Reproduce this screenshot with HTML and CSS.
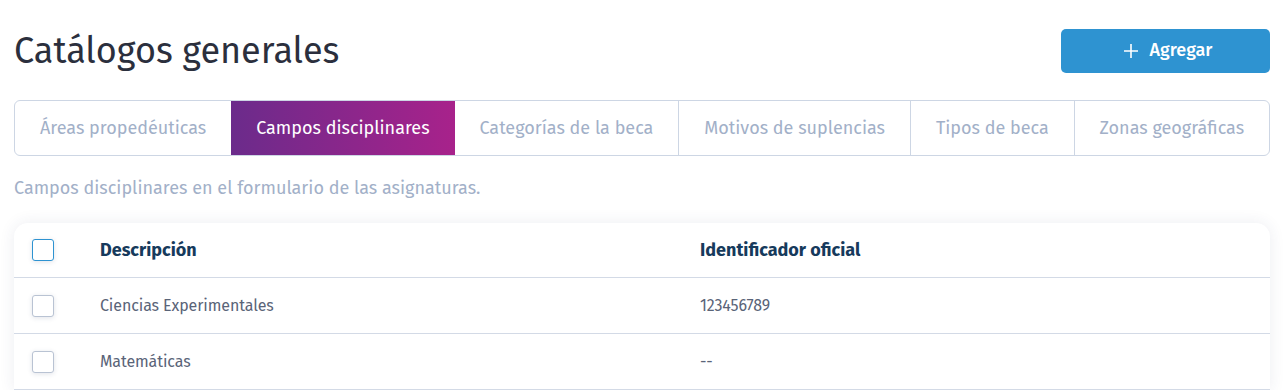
FILE: index.html
```html
<!DOCTYPE html>
<html lang="es">
<head>
<meta charset="utf-8">
<title>Catálogos generales</title>
<link rel="stylesheet" href="styles.css">
</head>
<body>
<div class="page">
  <header class="top">
    <h1 class="title">Catálogos generales</h1>
    <button class="btn-add"><svg class="plus" width="16" height="16" viewBox="0 0 16 16"><path d="M8 1v14M1 8h14" stroke="#fff" stroke-width="1.6" fill="none"/></svg><span>Agregar</span></button>
  </header>
  <nav class="tabs">
    <div class="tab">Áreas propedéuticas</div>
    <div class="tab active">Campos disciplinares</div>
    <div class="tab">Categorías de la beca</div>
    <div class="tab">Motivos de suplencias</div>
    <div class="tab">Tipos de beca</div>
    <div class="tab">Zonas geográficas</div>
  </nav>
  <p class="subtitle">Campos disciplinares en el formulario de las asignaturas.</p>
  <div class="card">
    <div class="row head">
      <div class="cell-check"><span class="check blue"></span></div>
      <div class="cell-desc">Descripción</div>
      <div class="cell-id">Identificador oficial</div>
    </div>
    <div class="row">
      <div class="cell-check"><span class="check"></span></div>
      <div class="cell-desc">Ciencias Experimentales</div>
      <div class="cell-id">123456789</div>
    </div>
    <div class="row">
      <div class="cell-check"><span class="check"></span></div>
      <div class="cell-desc">Matemáticas</div>
      <div class="cell-id">--</div>
    </div>
  </div>
</div>
</body>
</html>
```
FILE: styles.css
```css
* { box-sizing: border-box; }
html, body { margin: 0; padding: 0; background: #fff; }
body { font-family: "Fira Sans", Roboto, "Liberation Sans", sans-serif; color: #2b2f3d; }
.page { padding: 29px 16px 0 14px; }
.top { display: flex; justify-content: space-between; align-items: flex-start; height: 71px; }
.title { margin: 0; font-size: 36px; font-weight: 400; line-height: 44px; color: #2b2f3d; }
.btn-add { display: flex; align-items: center; justify-content: center; gap: 11px; width: 209px; height: 44px; border: 0; border-radius: 5px; background: #2e93d1; color: #fff; font-family: inherit; font-size: 18px; font-weight: 500; padding: 0 0 3px 4px; }
.btn-add .plus { margin-top: 2px; }
.tabs { display: flex; border: 1px solid #cdd6e4; border-radius: 6px; height: 56px; overflow: hidden; }
.tab { flex: 1 1 auto; display: flex; align-items: center; justify-content: center; padding: 0 24px; font-size: 18px; color: #a2b0c8; border-left: 1px solid #cdd6e4; white-space: nowrap; }
.tab:first-child { border-left: 0; }
.tab.active { background: linear-gradient(90deg, #6b2b8b 0%, #a8228b 100%); color: #fff; border-left: 0; }
.tab.active + .tab { border-left: 0; }
.subtitle { margin: 21px 0 0; font-size: 18px; line-height: 22px; color: #a2b0c8; }
.card { margin-top: 24px; background: #fff; border-radius: 14px 14px 0 0; box-shadow: 0 0 16px rgba(40, 60, 100, 0.09); }
.row { display: flex; align-items: center; height: 56px; border-bottom: 1px solid #d3dae6; font-size: 16px; color: #5a6478; letter-spacing: -0.1px; }
.row.head { height: 55px; font-size: 18px; font-weight: 700; color: #163a5c; letter-spacing: 0; }
.cell-check { width: 86px; padding-left: 18px; display: flex; }
.check { width: 22px; height: 22px; border: 1px solid #b9c3d3; border-radius: 3px; background: #fff; box-shadow: 0 1px 5px rgba(40, 60, 100, 0.14); }
.check.blue { border-color: #2e93d1; }
.cell-desc { width: 600px; }
.cell-id { flex: 1; }
```
